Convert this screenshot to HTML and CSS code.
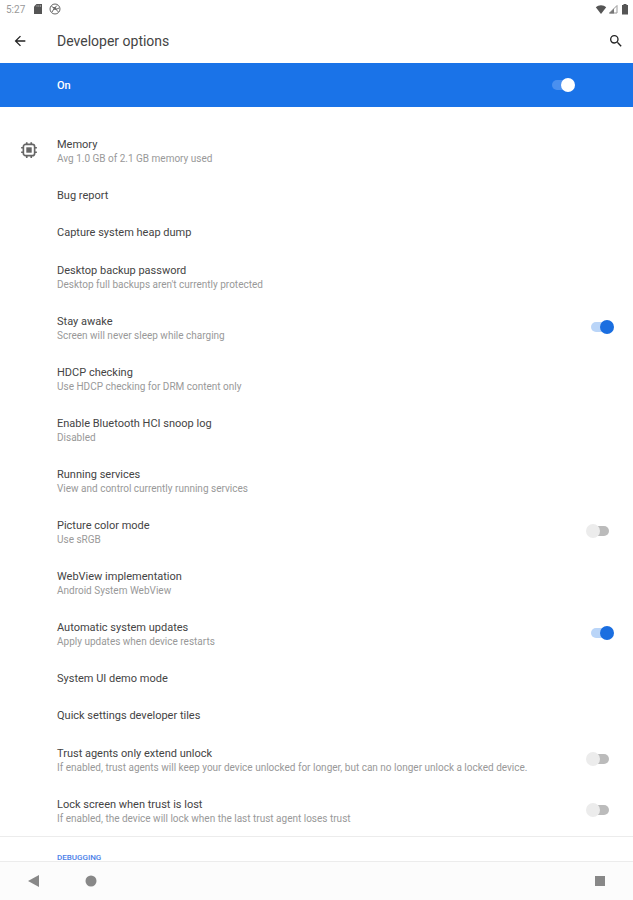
FILE: index.html
```
<!DOCTYPE html>
<html lang="en">
<head>
  <meta charset="UTF-8">
  <meta name="viewport" content="width=device-width, initial-scale=1">
  <title>Developer options</title>
  <link rel="stylesheet" href="styles.css">
</head>
<body>

  <div class="status-bar">
    <span class="time">5:27</span>
    <svg class="status-icon sd" viewBox="0 0 10 12"><path d="M3.5 1H9v10H1V3.6z" fill="#555"/><path d="M4 2v2M5.8 2v2M7.5 2v2" stroke="#aaa" stroke-width=".7"/></svg>
    <svg class="status-icon" viewBox="0 0 12 12" fill="none" stroke="#666"><circle cx="6" cy="6" r="5"/><path d="M2.5 3.5l3 1.5L8 2.5M5.5 5L3 9M5.5 5l4 4M7 6.5l3-1.5"/><circle cx="6" cy="5.5" r="1" fill="#666"/></svg>
    <span class="spacer"></span>
    <svg class="status-icon" viewBox="0 0 12 12"><path d="M6 11L.8 4.2C3.500 1.500 8.500 1.500 11.200 4.200z" fill="#555"/></svg>
    <svg class="status-icon" viewBox="0 0 12 12"><path d="M10 2.500V10H2.500z" fill="none" stroke="#999"/><path d="M7 5.500V10.500H2z" fill="#777"/></svg>
    <svg class="status-icon" viewBox="0 0 12 12"><path d="M4.500 1h3v1H9v9.500H3V2h1.500z" fill="#555"/></svg>
  </div>

  <header class="app-bar">
    <button class="icon-button" type="button" aria-label="Back">
      <svg viewBox="0 0 24 24"><path d="M20 11H7.830l5.590-5.590L12 4l-8 8 8 8 1.410-1.410L7.830 13H20z" fill="#222"/></svg>
    </button>
    <h1>Developer options</h1>
    <button class="icon-button" type="button" aria-label="Search">
      <svg viewBox="0 0 24 24"><path d="M15.500 14h-.790l-.280-.270A6.470 6.470 0 0 0 16 9.500 6.500 6.500 0 1 0 9.500 16c1.610 0 3.090-.590 4.230-1.570l.270.280v.790l5 4.990L20.490 19zm-6 0a4.500 4.500 0 1 1 0-9 4.500 4.500 0 0 1 0 9z" fill="#222"/></svg>
    </button>
  </header>

  <label class="master">
    <span class="master-text">On</span>
    <input class="switch" type="checkbox" checked>
  </label>

  <main>
    <button class="row" type="button">
      <svg class="row-icon" viewBox="0 0 24 24" fill="none" stroke="#666" stroke-width="2.200"><rect x="4.500" y="4.500" width="15" height="15" rx="3"/><path d="M9 1.500v3M15 1.500v3M9 19.500v3M15 19.500v3M1.500 9h3M1.500 15h3M19.500 9h3M19.500 15h3"/><rect x="9.500" y="9.500" width="5" height="5" fill="#666"/></svg>
      <span class="text"><span class="title">Memory</span><span class="summary">Avg 1.0 GB of 2.1 GB memory used</span></span>
    </button>
    <button class="row single" type="button">
      <span class="text"><span class="title">Bug report</span></span>
    </button>
    <button class="row single" type="button">
      <span class="text"><span class="title">Capture system heap dump</span></span>
    </button>
    <button class="row" type="button">
      <span class="text"><span class="title">Desktop backup password</span><span class="summary">Desktop full backups aren't currently protected</span></span>
    </button>
    <label class="row">
      <span class="text"><span class="title">Stay awake</span><span class="summary">Screen will never sleep while charging</span></span>
      <input class="switch" type="checkbox" checked>
    </label>
    <button class="row" type="button">
      <span class="text"><span class="title">HDCP checking</span><span class="summary">Use HDCP checking for DRM content only</span></span>
    </button>
    <button class="row" type="button">
      <span class="text"><span class="title">Enable Bluetooth HCI snoop log</span><span class="summary">Disabled</span></span>
    </button>
    <button class="row" type="button">
      <span class="text"><span class="title">Running services</span><span class="summary">View and control currently running services</span></span>
    </button>
    <label class="row">
      <span class="text"><span class="title">Picture color mode</span><span class="summary">Use sRGB</span></span>
      <input class="switch" type="checkbox">
    </label>
    <button class="row" type="button">
      <span class="text"><span class="title">WebView implementation</span><span class="summary">Android System WebView</span></span>
    </button>
    <label class="row">
      <span class="text"><span class="title">Automatic system updates</span><span class="summary">Apply updates when device restarts</span></span>
      <input class="switch" type="checkbox" checked>
    </label>
    <button class="row single" type="button">
      <span class="text"><span class="title">System UI demo mode</span></span>
    </button>
    <button class="row single" type="button">
      <span class="text"><span class="title">Quick settings developer tiles</span></span>
    </button>
    <label class="row">
      <span class="text"><span class="title">Trust agents only extend unlock</span><span class="summary">If enabled, trust agents will keep your device unlocked for longer, but can no longer unlock a locked device.</span></span>
      <input class="switch" type="checkbox">
    </label>
    <label class="row">
      <span class="text"><span class="title">Lock screen when trust is lost</span><span class="summary">If enabled, the device will lock when the last trust agent loses trust</span></span>
      <input class="switch" type="checkbox">
    </label>
    <h2>DEBUGGING</h2>
  </main>

  <nav class="nav-bar">
    <button type="button" aria-label="Back"><svg viewBox="0 0 12 12"><path d="M11 0v12L0 6z"/></svg></button>
    <button type="button" aria-label="Home"><svg viewBox="0 0 12 12"><circle cx="6" cy="6" r="5.500"/></svg></button>
    <span class="spacer"></span>
    <button type="button" aria-label="Overview"><svg viewBox="0 0 12 12"><path d="M1 1h10v10H1z"/></svg></button>
  </nav>

</body>
</html>
```

FILE: styles.css
```
* {
  box-sizing: border-box;
}

body {
  display: flex;
  flex-direction: column;
  height: 100vh;
  margin: 0;
  background: #fff;
  color: #444;
  font-family: Roboto, Arial, sans-serif;
  font-size: 11px;
}

button {
  border: 0;
  padding: 0;
  background: none;
  color: inherit;
  font: inherit;
  text-align: left;
}

svg {
  display: block;
}

.spacer {
  flex: 1;
}

.status-bar {
  display: flex;
  align-items: center;
  height: 18px;
  padding: 0 2px 0 6px;
}

.time {
  margin-right: 8px;
  color: #999;
  font-size: 10px;
}

.status-icon {
  width: 12px;
  height: 12px;
}

.sd {
  width: 10px;
  margin-right: 6px;
}

.app-bar {
  display: flex;
  align-items: center;
  height: 45px;
  padding: 0 9px 0 12px;
}

.app-bar h1 {
  flex: 1;
  margin: 0;
  padding-left: 29px;
  font-size: 14px;
  font-weight: 400;
}

.icon-button svg {
  width: 16px;
  height: 16px;
}

.master {
  display: flex;
  align-items: center;
  justify-content: space-between;
  height: 44px;
  padding: 0 58px 0 57px;
  background: #1a73e8;
  color: #fff;
  font-weight: 500;
}

main {
  flex: 1;
  min-height: 0;
  padding-top: 18px;
  overflow: hidden;
}

.row {
  display: flex;
  align-items: center;
  width: 100%;
  height: 51px;
  padding: 0 19px 2px 20px;
}

.single {
  height: 38px;
}

.single + .single {
  height: 37px;
}

.row-icon {
  width: 18px;
  height: 18px;
  margin-right: -18px;
}

.text {
  flex: 1;
  padding: 2px 0 0 37px;
}

.title,
.summary {
  display: block;
}

.title {
  line-height: 15px;
}

.summary {
  color: #999;
  font-size: 10px;
  line-height: 13px;
}

/* on / off switches */
.switch {
  appearance: none;
  position: relative;
  width: 28px;
  height: 14px;
  margin: 0;
}

.switch::before,
.switch::after {
  content: "";
  position: absolute;
}

.switch::before {
  top: 2px;
  left: 5px;
  width: 18px;
  height: 10px;
  border-radius: 5px;
  background: #bbb;
}

.switch::after {
  top: 0;
  left: 0;
  width: 14px;
  height: 14px;
  border-radius: 50%;
  background: #ececec;
}

.switch:checked::before {
  background: #bad5f8;
}

.switch:checked::after {
  left: 14px;
  background: #1a6ee0;
}

.master .switch::before {
  background: #4a90ef;
}

.master .switch::after {
  background: #fff;
}

h2 {
  margin: 0;
  padding: 16px 57px 0;
  border-top: 1px solid #ececec;
  color: #4a80e8;
  font-size: 8px;
  font-weight: 500;
  line-height: 10px;
}

.nav-bar {
  display: flex;
  align-items: center;
  height: 39px;
  padding: 0 27px 0 28px;
  border-top: 1px solid #ececec;
  background: #fcfcfc;
}

.nav-bar button + button {
  margin-left: 45px;
}

.nav-bar svg {
  width: 12px;
  height: 12px;
  fill: #888;
}
```
